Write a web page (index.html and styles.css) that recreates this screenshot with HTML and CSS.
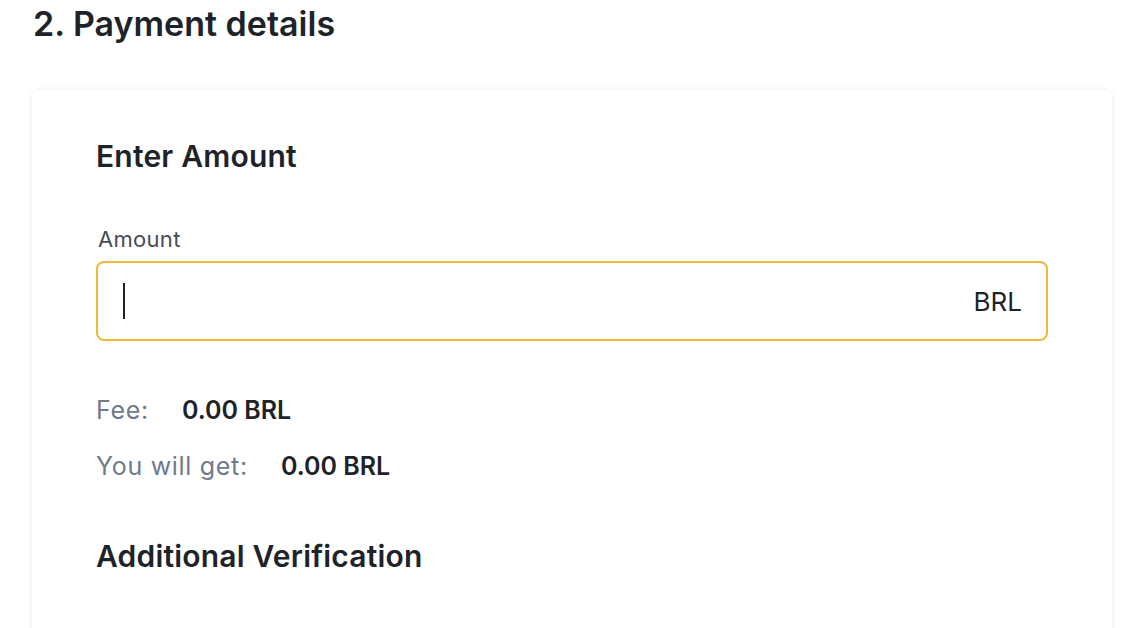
FILE: index.html
```html
<!DOCTYPE html>
<html lang="en">
<head>
<meta charset="UTF-8">
<title>Payment details</title>
<link rel="stylesheet" href="styles.css">
</head>
<body>

<!-- Step title -->
<h1 class="step-title">2. Payment details</h1>

<!-- Payment card -->
<div class="card">
    <h2 class="section-title">Enter Amount</h2>

    <label class="field-label" for="amount">Amount</label>
    <div class="amount-input">
        <span class="caret"></span>
        <input id="amount" type="text" value="">
        <span class="currency">BRL</span>
    </div>

    <div class="summary">
        <div class="summary-row">
            <span class="summary-label">Fee:</span>
            <span class="summary-value">0.00 BRL</span>
        </div>
        <div class="summary-row">
            <span class="summary-label">You will get:</span>
            <span class="summary-value">0.00 BRL</span>
        </div>
    </div>

    <h2 class="section-title extra">Additional Verification</h2>
</div>

</body>
</html>
```

FILE: styles.css
```css
body {
    font-family: 'Inter', 'Roboto', sans-serif;
    margin: 0;
    padding: 0 24px 0 33px;
    background-color: #fff;
    color: #1E2329;
    overflow: hidden;
}

.step-title {
    margin: 0;
    padding-top: 2px;
    font-size: 34px;
    line-height: 44px;
    font-weight: 600;
}

.card {
    margin-top: 44px;
    width: 1080px;
    box-sizing: border-box;
    padding: 46px 64px 80px 64px;
    background: #fff;
    border-radius: 8px;
    box-shadow: 0 0 6px rgba(0, 0, 0, 0.08);
    margin-left: -1px;
}

.section-title {
    margin: 0;
    font-size: 30px;
    line-height: 40px;
    font-weight: 600;
    letter-spacing: 0.2px;
}

.section-title.extra {
    margin-top: 42px;
}

.field-label {
    display: block;
    margin-top: 48px;
    margin-left: 2px;
    font-size: 22px;
    line-height: 30px;
    letter-spacing: 0.3px;
    color: #474D57;
}

.amount-input {
    display: flex;
    align-items: center;
    height: 80px;
    margin-top: 7px;
    padding: 0 24px 0 25px;
    box-sizing: border-box;
    border: 2px solid #EBBA3A;
    border-radius: 8px;
}

.caret {
    width: 2px;
    height: 36px;
    background: #1E2329;
}

.amount-input input {
    flex: 1;
    border: none;
    outline: none;
    font: inherit;
    background: transparent;
}

.currency {
    font-size: 26px;
    color: #1E2329;
}

.summary {
    margin-top: 41px;
}

.summary-row {
    display: flex;
    align-items: baseline;
    font-size: 25px;
    line-height: 56px;
}

.summary-label {
    color: #707A8A;
    margin-right: 33px;
    letter-spacing: 0.7px;
}

.summary-value {
    font-weight: 600;
}
```
